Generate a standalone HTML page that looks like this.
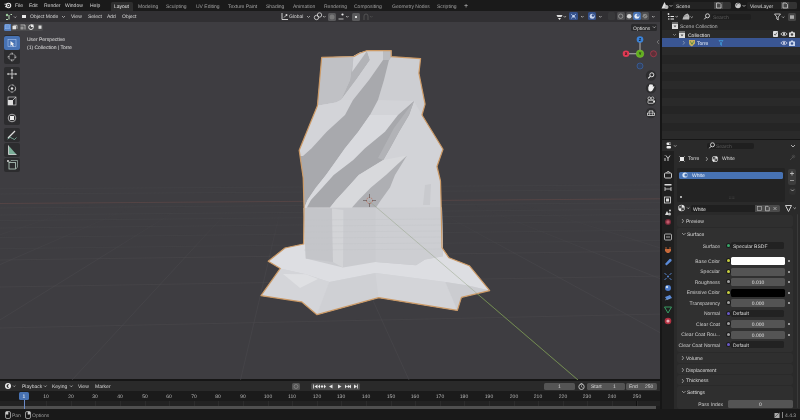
<!DOCTYPE html>
<html><head><meta charset="utf-8">
<style>
*{margin:0;padding:0;box-sizing:border-box}
html,body{width:800px;height:420px;overflow:hidden;background:#161616;font-family:"Liberation Sans",sans-serif;color:#d6d6d6;text-rendering:geometricPrecision}
.a{position:absolute}
.t{position:absolute;font-size:5px;line-height:8.4px;white-space:nowrap;will-change:transform}
.r{text-align:right}
.c{text-align:center}
#top{left:0;top:0;width:800px;height:11px;background:#1a1a1a}
#vp{left:0;top:11px;width:660px;height:368px;background:#3e3d41;overflow:hidden}
#ol{left:662px;top:11px;width:138px;height:128px;background:#252525}
#pr{left:662px;top:140px;width:138px;height:269px;background:#2a2a2a;overflow:hidden}
#tl{left:0;top:381px;width:660px;height:28px;background:#1d1d1d;overflow:hidden}
#sb{left:0;top:409px;width:800px;height:11px;background:#191919}
svg{position:absolute;left:0;top:0}
</style></head><body>
<!-- TOP BAR -->
<div id="top" class="a">
  <svg width="12" height="11" style="left:1.5px;top:-0.5px"><circle cx="6.5" cy="5.5" r="2.2" fill="none" stroke="#e8e8e8" stroke-width="1.1"/><path d="M2.5 4.2 L5.5 4.2 M3 6.8 L5.5 6" stroke="#e8e8e8" stroke-width="0.9"/><circle cx="6.5" cy="5.5" r="0.8" fill="#e8e8e8"/></svg>
  <div class="t" style="left:15px;top:2px">File</div>
  <div class="t" style="left:29px;top:2px">Edit</div>
  <div class="t" style="left:44px;top:2px">Render</div>
  <div class="t" style="left:65px;top:2px">Window</div>
  <div class="t" style="left:90px;top:2px">Help</div>
  <div class="a" style="left:111px;top:2px;width:22px;height:9px;background:#2e2e2e;border-radius:1.5px 1.5px 0 0"></div>
  <div class="t" style="left:114px;top:3px;color:#e6e6e6">Layout</div>
  <div class="t" style="left:138px;top:3px;color:#a0a0a0">Modeling</div>
  <div class="t" style="left:166px;top:3px;color:#a0a0a0">Sculpting</div>
  <div class="t" style="left:196px;top:3px;color:#a0a0a0">UV Editing</div>
  <div class="t" style="left:228px;top:3px;color:#a0a0a0">Texture Paint</div>
  <div class="t" style="left:266px;top:3px;color:#a0a0a0">Shading</div>
  <div class="t" style="left:293px;top:3px;color:#a0a0a0">Animation</div>
  <div class="t" style="left:324px;top:3px;color:#a0a0a0">Rendering</div>
  <div class="t" style="left:354px;top:3px;color:#a0a0a0">Compositing</div>
  <div class="t" style="left:392px;top:3px;color:#a0a0a0">Geometry Nodes</div>
  <div class="t" style="left:437px;top:3px;color:#a0a0a0">Scripting</div>
  <div class="t" style="left:464px;top:2.5px;color:#c8c8c8;font-size:7px">+</div>
  <svg width="14" height="11" style="left:660px;top:0"><path d="M1.5 8.5 L4.5 2 L7.5 8.5 Z" fill="#e0e0e0"/><circle cx="6.5" cy="7" r="2" fill="#b8b8b8"/><path d="M9.5 5 L11 6.5 L12.5 5" stroke="#ccc" stroke-width="0.7" fill="none"/></svg>
  <div class="a" style="left:673px;top:2px;width:41px;height:7px;background:#232323;border-radius:1.5px 0 0 1.5px"></div>
  <div class="t" style="left:676px;top:2.5px;color:#d8d8d8">Scene</div>
  <div class="a" style="left:714px;top:2px;width:9px;height:7px;background:#474747"></div>
  <svg width="9" height="11" style="left:714px;top:0"><path d="M2.5 3 h3 l1.5 1.5 v3.5 h-4.5 z" fill="none" stroke="#ddd" stroke-width="0.7"/></svg>
  <div class="a" style="left:723px;top:2px;width:8px;height:7px;background:#333;border-radius:0 1.5px 1.5px 0"></div>
  <svg width="14" height="11" style="left:733px;top:0"><circle cx="5" cy="5.5" r="2.8" fill="#c8c8c8"/><path d="M3.5 5.5 a1.8 1.8 0 0 1 3 -1.5" stroke="#444" stroke-width="0.9" fill="none"/><path d="M9.5 5 L11 6.5 L12.5 5" stroke="#ccc" stroke-width="0.7" fill="none"/></svg>
  <div class="a" style="left:747px;top:2px;width:34px;height:7px;background:#232323;border-radius:1.5px 0 0 1.5px"></div>
  <div class="t" style="left:750px;top:2.5px;color:#d8d8d8">ViewLayer</div>
  <div class="a" style="left:781px;top:2px;width:8px;height:7px;background:#474747"></div>
  <svg width="9" height="11" style="left:781px;top:0"><path d="M2 3 h3 l1.5 1.5 v3.5 h-4.5 z" fill="none" stroke="#ddd" stroke-width="0.7"/></svg>
  <div class="a" style="left:789px;top:2px;width:8px;height:7px;background:#333;border-radius:0 1.5px 1.5px 0"></div>
</div>
<!-- VIEWPORT -->
<div id="vp" class="a"></div>
<div class="a" style="left:0;top:11px;width:660px;height:11px;background:#313033"></div>
<!-- grid & axis lines + object -->
<svg width="660" height="380" style="left:0;top:0">
  <defs><linearGradient id="gf" gradientUnits="userSpaceOnUse" x1="0" y1="205" x2="0" y2="265"><stop offset="0" stop-color="#49484c" stop-opacity="0"/><stop offset="1" stop-color="#49484c" stop-opacity="1"/></linearGradient></defs><g stroke="#454448" stroke-width="0.6" fill="none"><path d="M0 188.8 L660 184.9"/><path d="M0 194.0 L660 189.8"/><path d="M0 208.0 L660 202.7"/><path d="M0 215.0 L660 209.2"/><path d="M0 220.6 L660 214.4"/><path d="M0 228.0 L660 221.3"/><path d="M0 237.5 L660 230.1"/><path d="M0 248.7 L660 240.5"/></g><g stroke="#49484c" stroke-width="0.6" fill="none"><path d="M0 260.0 L660 251.0"/><path d="M0 287.0 L660 276.1"/><path d="M0 328.0 L660 314.1"/></g><g stroke="url(#gf)" stroke-width="0.6" fill="none"><path d="M88.8 205 L-434.2 380"/><path d="M137.0 205 L-265.5 380"/><path d="M185.2 205 L-96.8 380"/><path d="M233.4 205 L72.0 380"/><path d="M281.6 205 L240.5 380"/><path d="M329.7 205 L409.0 380"/><path d="M426.2 205 L746.8 380"/><path d="M474.4 205 L915.5 380"/><path d="M522.6 205 L1084.0 380"/></g>
  <path d="M0 203.5 L660 198.8" stroke="#5a4646" stroke-width="0.8"/>
  <path d="M369 201 L578 380" stroke="#6a8a3a" stroke-width="0.8"/>
</svg>
<!-- header items -->
<svg width="14" height="11" style="left:3px;top:11px"><circle cx="4" cy="4" r="1.2" fill="#9c9"/><path d="M3 8.5 h2 M6 4 v4.5 M7.5 3.5 h1.5" stroke="#bdb" stroke-width="1"/><path d="M11 5.5 L12.2 6.7 L13.4 5.5" stroke="#ccc" stroke-width="0.7" fill="none"/></svg>
<div class="a" style="left:22.3px;top:14.6px;width:4px;height:3.5px;background:#e8e8e8"></div>
<div class="t" style="left:30px;top:13px">Object Mode</div>
<svg width="6" height="11" style="left:61px;top:11px"><path d="M1 5 L2.5 6.5 L4 5" stroke="#ccc" stroke-width="0.7" fill="none"/></svg>
<div class="t" style="left:71px;top:13px">View</div>
<div class="t" style="left:88px;top:13px">Select</div>
<div class="t" style="left:107px;top:13px">Add</div>
<div class="t" style="left:122px;top:13px">Object</div>
<!-- center header -->
<svg width="10" height="11" style="left:280px;top:11px"><path d="M2 2 v6.5 h6" stroke="#ddd" stroke-width="0.9" fill="none"/><path d="M4 6.5 l2 -2" stroke="#ddd" stroke-width="0.8"/><circle cx="6.5" cy="4" r="1" fill="#ddd"/></svg>
<div class="t" style="left:289px;top:13px">Global</div>
<svg width="6" height="11" style="left:306px;top:11px"><path d="M1 5 L2.5 6.5 L4 5" stroke="#ccc" stroke-width="0.7" fill="none"/></svg>
<svg width="14" height="11" style="left:313px;top:11px"><circle cx="3.5" cy="6.5" r="2.2" stroke="#ddd" stroke-width="0.8" fill="none"/><circle cx="6.5" cy="4" r="2.2" stroke="#ddd" stroke-width="0.8" fill="none"/><path d="M10 5 L11.3 6.3 L12.6 5" stroke="#ccc" stroke-width="0.7" fill="none"/></svg>
<div class="a" style="left:328px;top:12.5px;width:8px;height:8px;background:#5a5a5c;border-radius:1.5px"></div>
<svg width="8" height="8" style="left:328px;top:12.5px"><circle cx="4" cy="4" r="2.5" fill="#787878"/></svg>
<svg width="14" height="11" style="left:337px;top:11px"><path d="M1.5 8 h5" stroke="#ddd" stroke-width="0.8"/><circle cx="5.5" cy="3.5" r="1.1" fill="#eee"/><path d="M9 5 L10.3 6.3 L11.6 5" stroke="#ccc" stroke-width="0.7" fill="none"/></svg>
<div class="a" style="left:352px;top:12.5px;width:8px;height:8px;background:#5a5a5c;border-radius:1.5px"></div>
<div class="a" style="left:355px;top:15.5px;width:2px;height:2px;background:#ddd"></div>
<svg width="14" height="11" style="left:361px;top:11px"><path d="M3 9 v-4 a2 2 0 0 1 4 0 v4" stroke="#5a5a5a" stroke-width="0.8" fill="none"/><path d="M9 5 L10.3 6.3 L11.6 5" stroke="#555" stroke-width="0.7" fill="none"/></svg>
<!-- right header -->
<svg width="12" height="11" style="left:555px;top:11px"><path d="M1.5 4 h6 l-1 2 h-4 z" fill="#ddd"/><path d="M3 7 l1.5 2 l1.5 -2z" fill="#eee"/><path d="M8.5 5 L9.8 6.3 L11.1 5" stroke="#ccc" stroke-width="0.7" fill="none"/></svg>
<div class="a" style="left:568.6px;top:12.2px;width:9px;height:8px;background:#34508a;border-radius:1.5px"></div>
<svg width="9" height="8" style="left:568.6px;top:12.2px"><path d="M2 2 L7 6.5 M7 2 L2 6.5" stroke="#9ab4e0" stroke-width="0.9"/><circle cx="4.5" cy="4.2" r="1.2" fill="#c8d4ec"/></svg>
<svg width="6" height="11" style="left:579.5px;top:11px"><path d="M1 5 L2.3 6.3 L3.6 5" stroke="#ccc" stroke-width="0.7" fill="none"/></svg>
<div class="a" style="left:587.8px;top:12.2px;width:8.5px;height:8px;background:#34508a;border-radius:1.5px"></div>
<svg width="9" height="8" style="left:587.8px;top:12.2px"><circle cx="4.2" cy="4.2" r="2.5" fill="#c8d4ec"/><circle cx="5" cy="3.5" r="1.2" fill="#34508a"/></svg>
<svg width="6" height="11" style="left:598px;top:11px"><path d="M1 5 L2.3 6.3 L3.6 5" stroke="#ccc" stroke-width="0.7" fill="none"/></svg>
<div class="a" style="left:607.5px;top:12.2px;width:7.5px;height:8px;background:#38383a;border-radius:1.5px"></div>
<div class="a" style="left:617px;top:12.2px;width:7.5px;height:8px;background:#4e4e50;border-radius:1.5px"></div>
<div class="a" style="left:625.5px;top:12.2px;width:7.5px;height:8px;background:#4e4e50;border-radius:1.5px"></div>
<div class="a" style="left:633.2px;top:12.2px;width:7.5px;height:8px;background:#4772b3;border-radius:1.5px"></div>
<div class="a" style="left:641.3px;top:12.2px;width:7.5px;height:8px;background:#4e4e50;border-radius:1.5px"></div>
<svg width="34" height="9" style="left:616px;top:12px">
  <circle cx="4.7" cy="4.2" r="2.2" fill="none" stroke="#aaa" stroke-width="0.7"/>
  <circle cx="13.2" cy="4.2" r="2.3" fill="#d8d8d8"/>
  <circle cx="20.9" cy="4.2" r="2.5" fill="#e6ecf6"/><circle cx="21.9" cy="3.4" r="1.3" fill="#5a80c0"/>
  <circle cx="29" cy="4.2" r="2.4" fill="#8a8a8a"/><path d="M27.3 5.7 L30.7 2.7" stroke="#4a4a4a" stroke-width="0.7"/>
</svg>
<svg width="6" height="11" style="left:650.5px;top:11px"><path d="M1 5 L2.3 6.3 L3.6 5" stroke="#ccc" stroke-width="0.7" fill="none"/></svg>
<!-- select mode row -->
<div class="a" style="left:11px;top:23.6px;width:32px;height:7px;background:#4a4a4c;border-radius:0 1.5px 1.5px 0"></div>
<div class="a" style="left:4px;top:23.6px;width:7px;height:7px;background:#5680c2;border-radius:1.5px 0 0 1.5px"></div>
<svg width="40" height="8" style="left:4px;top:23.2px">
  <rect x="1.5" y="1.8" width="4" height="4" fill="#6c98d8" stroke="#9ab8e8" stroke-width="0.5"/>
  <rect x="8.5" y="2.8" width="3.5" height="3.5" fill="#e0e0e0"/><path d="M9.5 2.3 h3.5 v3.5" fill="none" stroke="#ddd" stroke-width="0.7"/>
  <path d="M16.5 2 h4.5 v4.5" fill="none" stroke="#ddd" stroke-width="0.7"/><rect x="16.5" y="3.5" width="3" height="3" fill="#999"/>
  <circle cx="27" cy="4.2" r="2.3" fill="none" stroke="#e8e8e8" stroke-width="1"/><rect x="27" y="1.5" width="2.5" height="2.5" fill="#e8e8e8"/>
  <rect x="34.5" y="2.5" width="3" height="3.3" fill="#ddd"/>
</svg>
<!-- overlay text -->
<div class="t" style="left:27px;top:36px;color:#e0e0e0">User Perspective</div>
<div class="t" style="left:27px;top:43.5px;color:#e0e0e0">(1) Collection | Torre</div>
<!-- toolbar -->
<div class="a" style="left:4px;top:35px;width:16px;height:29px;background:#2c2c2e;border-radius:2px"></div>
<div class="a" style="left:4px;top:36px;width:16px;height:14px;background:#4772b3;border-radius:2px"></div>
<svg width="16" height="14" style="left:4px;top:36px"><rect x="4" y="3.5" width="8" height="7" fill="none" stroke="#a8c4ee" stroke-width="0.6"/><path d="M6.5 5 L6.5 10 L7.8 8.8 L9 10.8 L9.8 10.3 L8.8 8.3 L10.5 8.2 Z" fill="#f0f0f0"/></svg>
<svg width="16" height="14" style="left:4px;top:50px"><circle cx="8" cy="7" r="3.3" fill="none" stroke="#ddd" stroke-width="0.8" stroke-dasharray="1.5 1"/><path d="M8 2.5 v2.3 M8 9.2 v2.3 M3.5 7 h2.3 M10.2 7 h2.3" stroke="#ddd" stroke-width="0.7"/></svg>
<div class="a" style="left:4px;top:67px;width:16px;height:58px;background:#2c2c2e;border-radius:2px"></div>
<svg width="16" height="58" style="left:4px;top:67px">
  <path d="M8 2.5 v9 M3.5 7 h9" stroke="#ddd" stroke-width="0.8"/><path d="M8 2 l-1.3 1.5 h2.6z M8 12 l-1.3 -1.5 h2.6z M3 7 l1.5 -1.3 v2.6z M13 7 l-1.5 -1.3 v2.6z" fill="#ddd"/>
  <circle cx="8" cy="21.5" r="3.6" fill="none" stroke="#ddd" stroke-width="0.8" stroke-dasharray="3 1"/><circle cx="8" cy="21.5" r="1.2" fill="#ddd"/>
  <rect x="4" y="33" width="5" height="5" fill="#ddd"/><rect x="4" y="30" width="8" height="8" fill="none" stroke="#ddd" stroke-width="0.6"/><path d="M9 33 l3 -3" stroke="#ddd" stroke-width="0.7"/>
  <circle cx="8" cy="51" r="3.8" fill="none" stroke="#ddd" stroke-width="0.7"/><rect x="6" y="49" width="4" height="4" fill="#eee"/>
</svg>
<div class="a" style="left:4px;top:128px;width:16px;height:14px;background:#2c2c2e;border-radius:2px"></div>
<svg width="16" height="14" style="left:4px;top:128px"><path d="M4 10 L11 3" stroke="#ddd" stroke-width="1.2"/><path d="M3.5 11 q3 -3 5 -0.5 t4 -1" stroke="#8fd0b8" stroke-width="0.7" fill="none"/></svg>
<div class="a" style="left:4px;top:143px;width:16px;height:14px;background:#2c2c2e;border-radius:2px"></div>
<svg width="16" height="14" style="left:4px;top:143px"><path d="M4.5 2.5 v9 h8 z" fill="#7aae98"/><path d="M4.5 2.5 v9 h8" stroke="#ddd" stroke-width="0.8" fill="none"/></svg>
<div class="a" style="left:4px;top:158px;width:16px;height:14px;background:#2c2c2e;border-radius:2px"></div>
<svg width="16" height="14" style="left:4px;top:158px"><rect x="5" y="4.5" width="6.5" height="6.5" fill="none" stroke="#b8d0c4" stroke-width="0.8"/><path d="M5 4.5 l2 -2 h6.5 v6.5 l-1.5 2" stroke="#b8d0c4" stroke-width="0.6" fill="none"/><circle cx="4" cy="3" r="1" fill="#ddd"/></svg>
<!-- Options -->
<div class="a" style="left:631px;top:24px;width:26px;height:7px;background:#2a2a2c;border-radius:1.5px"></div>
<div class="t" style="left:633px;top:24.5px;color:#ddd">Options</div>
<svg width="6" height="8" style="left:652px;top:23px"><path d="M1 3.5 L2.3 4.8 L3.6 3.5" stroke="#ccc" stroke-width="0.7" fill="none"/></svg>
<svg width="4" height="6" style="left:656px;top:39px"><path d="M3 1 L1 3 L3 5" stroke="#888" stroke-width="0.7" fill="none"/></svg>
<!-- gizmo -->
<svg width="40" height="40" style="left:620px;top:34px">
  <path d="M20 19.75 L20 5.5 M20 19.75 L6 19.75" stroke="#d0d0d0" stroke-width="0.8"/>
  <circle cx="20" cy="32" r="3" fill="#34425c" stroke="#3a6ab8" stroke-width="0.6"/>
  <circle cx="33.5" cy="19.75" r="3" fill="#5c3038" stroke="#c83a52" stroke-width="0.6"/>
  <circle cx="20" cy="5.5" r="3.3" fill="#3a82d8"/>
  <circle cx="6" cy="19.75" r="3.3" fill="#e03a54"/>
  <circle cx="20" cy="19.75" r="3.8" fill="#62b020" stroke="#8ad040" stroke-width="0.4"/>
  <g font-size="4" text-anchor="middle" fill="#111" font-family="Liberation Sans" font-weight="bold"><text x="20" y="21.2">Y</text><text x="20" y="7">Z</text><text x="6" y="21.2">X</text></g>
</svg>
<!-- nav buttons -->
<svg width="14" height="56" style="left:644px;top:70px">
  <g fill="#2e2e30"><circle cx="7" cy="5.5" r="5.2"/><circle cx="7" cy="18.3" r="5.2"/><circle cx="7" cy="30.6" r="5.2"/><circle cx="7" cy="43" r="5.2"/></g>
  <circle cx="7.8" cy="4.8" r="2" fill="none" stroke="#eee" stroke-width="0.9"/><path d="M6.3 6.3 L4.2 8.4" stroke="#eee" stroke-width="1.1"/>
  <path d="M4.3 19.5 L4.3 17 Q4.3 16.2 5 16.2 L5 15.2 Q5 14.5 5.7 14.5 Q6.3 14.5 6.3 15.2 L6.3 14.8 Q6.3 14.1 7 14.1 Q7.6 14.1 7.6 14.8 L7.6 15.2 Q7.6 14.6 8.3 14.6 Q8.9 14.6 8.9 15.3 L8.9 17 L9.6 16.3 Q10.2 15.9 10.5 16.5 L9 19.5 Q8.2 21.5 6.5 21.5 Q4.3 21.5 4.3 19.5 Z" fill="#eee"/>
  <circle cx="5.3" cy="28.3" r="1.4" fill="none" stroke="#eee" stroke-width="0.7"/><circle cx="8.5" cy="28.3" r="1.4" fill="none" stroke="#eee" stroke-width="0.7"/><rect x="4" y="30.3" width="5.5" height="3" rx="0.5" fill="none" stroke="#eee" stroke-width="0.7"/><path d="M9.5 31 l1.5 -0.8 v2.6 l-1.5 -0.8" fill="#eee"/>
  <path d="M3.5 45.5 v-2.5 q3.5 -4.5 7 0 v2.5z" fill="none" stroke="#eee" stroke-width="0.7"/><path d="M3.5 43.3 h7 M5.6 40.3 v5.2 M8.4 40.3 v5.2" stroke="#eee" stroke-width="0.5"/>
</svg>
<!-- OBJECT -->
<svg width="660" height="380" style="left:0;top:0" id="obj">
  <path d="M321.7 57.3 L354 56.5 L359 53.5 L366.4 50.7 L391.2 50.5 L391.2 56.6 L420.6 58.6 L418.9 73.2 L425.1 104.2 L422 115 L443 149.3 L437 166.5 L440.5 181 L441 199 L442 247.6 L449 257.8 L469.3 265.7 L489.7 290.6 L461.4 297.4 L457.4 310.4 L378.7 297.7 L317 314.7 L301.6 301.8 L261 295.7 L280.3 268.4 L268.2 261.3 L285 248 L303.6 244 L304 207 L303.2 178 L299.2 150.3 L317.4 105.7 Z" fill="#d2d3d7"/>
  <!-- upper left face -->
  <path d="M322 57.5 L353.5 56 L350 80 L341 100 L336 102.5 L317.4 105.7 Z" fill="#c0c1c5"/>
  <path d="M353.5 56 L360 52.5 L367 50.8 L370 60 L356 80 L341 100 L350 80 Z" fill="#b2b3b7"/>
  <path d="M353.5 56 L360 52.5 L367 51 L352 72 Z" fill="#d4d5d9"/>
  <!-- right face -->
  <path d="M391.2 57 L420.4 58.8 L418.9 73.2 L425 104 L422 115 L414 101 L378 100 L384 80 L389 60 Z" fill="#cdced2"/>
  <!-- light strip A + lower-left light face -->
  <path d="M367 51 L383 51 L383 60 L369 80 L353 100 L345 115 L326.7 131.7 L311.7 148.3 L303 156 L299.5 150.5 L317.4 105.7 L336 102.5 L341 100 L356 80 L370 60 Z" fill="#d0d1d5"/>
  <path d="M317.4 105.7 L336 102.5 L341 100 L353 100 L345 115 L326.7 131.7 L311.7 148.3 L303 156 L299.5 150.5 Z" fill="#d3d4d8"/>
  <!-- band 1 -->
  <path d="M383 51 L391.2 50.8 L391.2 57 L389 60 L384 80 L378 100 L370 115 L358.3 131.7 L345 148.3 L336.7 160 L326 175 L316 187.5 L307.5 200 L304.5 207.5 L303.5 178 L300 156 L303 156 L311.7 148.3 L326.7 131.7 L345 115 L353 100 L369 80 L383 60 Z" fill="#a8a9ad"/>
  <path d="M383 51 L391.2 50.8 L391.2 57 L389 60 L383 60 Z" fill="#bbbcc0"/>
  <!-- ridge 1 lighter -->
  <path d="M370 115 L401.7 115 L388.3 131.7 L365 148.3 L353.3 160 L333.75 175 L322.5 187.5 L311 200 L307 207.5 L304.5 207.5 L307.5 200 L316 187.5 L326 175 L336.7 160 L345 148.3 L358.3 131.7 Z" fill="#d9dade"/>
  <!-- band 2 -->
  <path d="M414 101 L409 115 L399 131.7 L390 148.3 L383.3 160 L358.75 175 L347.5 187.5 L336 200 L330 207.5 L307 207.5 L311 200 L322.5 187.5 L333.75 175 L353.3 160 L365 148.3 L385 131.7 L398 115 Z" fill="#a7a8ac"/>
  <path d="M414 101 L409 115 L399 131.7 L390 148.3 L383.3 160 L378 158 L394 128 Z" fill="#b2b3b7"/>
  <!-- ridge 2 -->
  <path d="M383.3 160 L407 155.5 L386 175 L371 187.5 L358.75 200 L352 207.5 L330 207.5 L336 200 L347.5 187.5 L358.75 175 Z" fill="#d8d9dc"/>
  <!-- band 3 -->
  <path d="M407 155.5 L395 175 L390 187.5 L381 200 L376 207.5 L352 207.5 L358.75 200 L371 187.5 L386 175 Z" fill="#aeafb3"/>
  <path d="M425 185 L431 184 L430 205 L423 205 Z" fill="#c9cace"/>
  <!-- base -->
  <path d="M303.6 244 L285 248 L268.2 261.3 L280.3 268.4 L305.8 274.3 L329.4 282 L375.6 273 L445.4 282 L468 285.6 L489.7 290.6 L469.3 265.7 L449 257.8 L442 247.6 Z" fill="#dddee2"/>
  <path d="M261 295.7 L280.3 268.4 L305.8 274.3 L329.4 282 L317 314.7 L301.6 301.8 Z" fill="#d4d5d9"/>
  <path d="M283 274 L305.8 274.3 L318 279 L300 288 Z" fill="#dfe0e3"/>
  <path d="M329.4 282 L375.6 273 L378.7 297.7 L317 314.7 Z" fill="#cfd0d4"/>
  <path d="M375.6 273 L445.4 282 L457.4 310.4 L378.7 297.7 Z" fill="#d3d4d8"/>
  <path d="M445.4 282 L468 285.6 L489.7 290.6 L461.4 297.4 L457.4 310.4 Z" fill="#cbccd0"/>
  <!-- lower box -->
  <path d="M303.6 208 L442 207.5 L443 256.3 L425 259.6 L416 265.3 L375.6 262 L343 267.5 L305.8 258.5 Z" fill="#cacbcf"/>
  <path d="M303.6 208 L332 208.5 L333 262 L305.8 258.5 Z" fill="#c4c5c9"/>
  <path d="M332 208.5 L343.4 210 L343 267.5 L333 262 Z" fill="#d3d4d7"/>
  <path d="M375.6 209 L442 207.5 L443 256.3 L425 259.6 L416 265.3 L375.6 262 Z" fill="#cdced2"/>
  <g stroke="#c0c1c5" stroke-width="0.35"><path d="M304 220 L442 219"/><path d="M304 226 L442 225"/><path d="M304 232 L442 231"/><path d="M304 238 L442 237"/><path d="M304 244 L442 243"/><path d="M304 250 L442 249"/></g>
  <!-- outline -->
  <path d="M321.7 57.3 L354 56.5 L359 53.5 L366.4 50.7 L391.2 50.5 L391.2 56.6 L420.6 58.6 L418.9 73.2 L425.1 104.2 L422 115 L443 149.3 L437 166.5 L440.5 181 L441 199 L442 247.6 L449 257.8 L469.3 265.7 L489.7 290.6 L461.4 297.4 L457.4 310.4 L378.7 297.7 L317 314.7 L301.6 301.8 L261 295.7 L280.3 268.4 L268.2 261.3 L285 248 L303.6 244 L304 207 L303.2 178 L299.2 150.3 L317.4 105.7 Z" fill="none" stroke="#cc9a66" stroke-width="1.2" stroke-linejoin="round"/>
  <!-- y axis line over object -->
  <path d="M369 201 L578 380" stroke="#8a9a78" stroke-width="0.6" opacity="0.7"/>
  <!-- 3d cursor -->
  <g transform="translate(369.5,200.5)">
    <circle r="3" fill="none" stroke="#c06048" stroke-width="0.7" stroke-dasharray="1.5 1.1"/>
    <path d="M0 -6.5 v4 M0 2.5 v4 M-6.5 0 h4 M2.5 0 h4" stroke="#5a4a48" stroke-width="0.6"/>
  </g>
</svg>

<!-- OUTLINER -->
<div id="ol" class="a"></div>
<div class="a" style="left:662px;top:30.3px;width:138px;height:8.4px;background:#2a2a2a"></div>
<div class="a" style="left:662px;top:47.1px;width:138px;height:8.4px;background:#2a2a2a"></div>
<div class="a" style="left:662px;top:63.9px;width:138px;height:8.4px;background:#2a2a2a"></div>
<div class="a" style="left:662px;top:80.7px;width:138px;height:8.4px;background:#2a2a2a"></div>
<div class="a" style="left:662px;top:97.5px;width:138px;height:8.4px;background:#2a2a2a"></div>
<div class="a" style="left:662px;top:114.3px;width:138px;height:8.4px;background:#2a2a2a"></div>
<div class="a" style="left:662px;top:131.1px;width:138px;height:7.9px;background:#2a2a2a"></div>
<!-- outliner header -->
<svg width="14" height="11" style="left:666px;top:11px"><circle cx="2.5" cy="3" r="0.9" fill="#ddd"/><path d="M2 5.5 h1.5 M4.5 5.5 h3.5 M2 8 h1.5 M4.5 8 h3.5" stroke="#eee" stroke-width="1"/><path d="M9.5 5 L10.7 6.2 L11.9 5" stroke="#ccc" stroke-width="0.7" fill="none"/></svg>
<svg width="14" height="11" style="left:681px;top:11px"><path d="M1.5 8.5 q1 -5 5 -6 q3 2 1.5 6z" fill="#bbb"/><path d="M3 6 q2 -2 4 -1" stroke="#777" stroke-width="0.6" fill="none"/><path d="M9.5 5.5 L10.7 6.7 L11.9 5.5" stroke="#ccc" stroke-width="0.7" fill="none"/></svg>
<svg width="10" height="11" style="left:702px;top:11px"><circle cx="5.5" cy="4.8" r="2" fill="none" stroke="#ddd" stroke-width="0.9"/><path d="M4 6.3 L2.3 8.3" stroke="#ddd" stroke-width="1"/></svg>
<div class="a" style="left:711px;top:13.5px;width:40px;height:6.5px;background:#1f1f1f;border-radius:2px"></div>
<div class="t" style="left:713px;top:14px;color:#5c5c5c">Search</div>
<svg width="14" height="11" style="left:773px;top:11px"><path d="M1.5 3 h6 l-2.3 3 v3 l-1.4 -1 v-2z" fill="none" stroke="#ddd" stroke-width="0.8"/><path d="M9 5.5 L10.2 6.7 L11.4 5.5" stroke="#ccc" stroke-width="0.7" fill="none"/></svg>
<div class="a" style="left:788px;top:13px;width:8px;height:7.5px;background:#444;border-radius:1.5px"></div>
<svg width="8" height="8" style="left:788px;top:13px"><rect x="2" y="2.3" width="4" height="3.5" fill="#aaa"/></svg>
<!-- rows -->
<svg width="8" height="8" style="left:671px;top:21.5px"><path d="M1 2 h6 v5 h-6z" fill="#ddd"/><path d="M2.5 3.5 h3 l-1.5 2z" fill="#555"/><path d="M1 1 h6" stroke="#ddd" stroke-width="0.8"/></svg>
<div class="t" style="left:680px;top:22.9px;color:#b8b8b8">Scene Collection</div>
<svg width="6" height="8" style="left:672px;top:31px"><path d="M1 3 L2.5 4.5 L4 3" stroke="#999" stroke-width="0.7" fill="none"/></svg>
<svg width="8" height="8" style="left:678px;top:30.5px"><path d="M1 2 h6 v5 h-6z" fill="#ddd"/><path d="M2.5 3.5 h3 l-1.5 2z" fill="#555"/><path d="M1 1 h6" stroke="#ddd" stroke-width="0.8"/></svg>
<div class="t" style="left:688px;top:32px;color:#e8e8e8">Collection</div>
<div class="a" style="left:773px;top:31px;width:5px;height:5.5px;background:#ddd;border-radius:0.8px"></div>
<svg width="5" height="6" style="left:773px;top:31px"><path d="M1 3 L2.2 4.2 L4 1.5" stroke="#333" stroke-width="0.7" fill="none"/></svg>
<svg width="8" height="8" style="left:780px;top:30px"><path d="M0.8 4 q3.2 -3.5 6.4 0 q-3.2 3.5 -6.4 0z" fill="none" stroke="#eee" stroke-width="0.7"/><circle cx="4" cy="4" r="1.1" fill="#eee"/></svg>
<svg width="8" height="8" style="left:788px;top:30px"><path d="M1 2.5 h1.5 l0.8 -1 h1.5 l0.8 1 h1.4 v4.5 h-6z" fill="#ddd"/><circle cx="4" cy="4.5" r="1.2" fill="#444"/></svg>
<div class="a" style="left:662px;top:38px;width:138px;height:8.5px;background:#3a5693"></div>
<svg width="6" height="8" style="left:681px;top:38.5px"><path d="M2 2 L3.5 3.8 L2 5.6" stroke="#9ab" stroke-width="0.7" fill="none"/></svg>
<svg width="8" height="8" style="left:688px;top:38.5px"><path d="M1 1 h6 v3.5 q-3 3 -3 3 q-3 -1 -3 -3z" fill="#c8b060"/><path d="M2.3 2.3 l1.7 3 l1.7 -3" stroke="#5a8a3a" stroke-width="0.9" fill="none"/></svg>
<div class="t" style="left:697px;top:40.2px;color:#e8eef8">Torre</div>
<svg width="6" height="8" style="left:718px;top:38.5px"><path d="M1 1.5 h4 l-1.5 2 v3 l-1 -0.8 v-2.2z" fill="none" stroke="#3fa0e0" stroke-width="0.7"/></svg>
<svg width="8" height="8" style="left:780px;top:38.5px"><path d="M0.8 4 q3.2 -3.5 6.4 0 q-3.2 3.5 -6.4 0z" fill="none" stroke="#dde" stroke-width="0.7"/><circle cx="4" cy="4" r="1.1" fill="#dde"/></svg>
<svg width="8" height="8" style="left:788px;top:38.5px"><path d="M1 2.5 h1.5 l0.8 -1 h1.5 l0.8 1 h1.4 v4.5 h-6z" fill="#c8d4ec"/><circle cx="4" cy="4.5" r="1.2" fill="#3a5693"/></svg>
<!-- PROPERTIES -->
<div id="pr" class="a"></div>
<!-- properties tab column -->
<div class="a" style="left:662px;top:151px;width:12px;height:258px;background:#1f1f1f"></div>
<svg width="12" height="180" style="left:662px;top:151px">
  <g fill="#ddd" stroke="#ddd">
  <path d="M3 10 v-3 M3 5 v-0.5 M6 10 v-2.5 l-2 -3 M6 7.5 l2 -3" stroke-width="0.9" fill="none"/>
  <rect x="2.5" y="22" width="7" height="5" rx="1" fill="none" stroke-width="0.9"/><path d="M4.5 22 l1 -1.5 h1.5 l1 1.5" stroke-width="0.7" fill="none"/>
  <rect x="2.5" y="33" width="7" height="1.5" stroke="none"/><path d="M3 36 v4 M9 36 v4 M3 38 h6" stroke-width="0.8" fill="none"/>
  <rect x="2.5" y="46" width="6" height="6" fill="none" stroke-width="0.8"/><rect x="4" y="47.5" width="3" height="3" stroke="none"/>
  <path d="M3 64 l2 -4 l2 4z" stroke="none"/><circle cx="7.5" cy="63" r="1.5" stroke="none" fill="#bbb"/><circle cx="8" cy="59.5" r="0.9" stroke="none"/>
  </g>
  <circle cx="6" cy="71" r="3" fill="#7a2a3a"/><circle cx="6" cy="71" r="1.7" fill="#c05a6a"/>
  <g fill="none" stroke="#ccc" stroke-width="0.8">
  <rect x="2.5" y="83" width="7" height="6" rx="1"/><path d="M4 86 h4"/>
  </g>
  <path d="M3 98 h6 v2 l-2 2 h-2 l-2 -2z" fill="#c86a3a"/><path d="M4 98 v-2 M8 98 v-2" stroke="#c86a3a" stroke-width="0.8"/>
  <path d="M3 113 l4.5 -5 a1.5 1.5 0 0 1 2 2 l-5 4.5z" fill="#5a8ad8"/>
  <path d="M2.5 122 l2 2 M9.5 122 l-2 2 M2.5 129 l2 -2 M9.5 129 l-2 -2" stroke="#5a8ad8" stroke-width="0.9"/><circle cx="6" cy="125.5" r="1" fill="#5a8ad8"/>
  <circle cx="6" cy="137" r="3" fill="#4a7ac8"/><circle cx="5" cy="136" r="1.2" fill="#cde"/>
  <path d="M3 146 l5 -2 l2 3 l-5 2z" fill="#5a8ad8"/><path d="M3 149 l5 -2" stroke="#8ab" stroke-width="0.6"/>
  <path d="M2.5 156 h7 l-3.5 6z" fill="none" stroke="#3aa86a" stroke-width="0.9"/>
  <circle cx="6" cy="170" r="3.3" fill="#b03040"/><circle cx="6" cy="170" r="1.6" fill="#e8b0b8"/>
</svg>
<!-- properties header -->
<svg width="14" height="11" style="left:664px;top:140px"><rect x="2.5" y="2.5" width="4.5" height="2.5" rx="1" fill="#eee"/><rect x="2.5" y="6" width="4.5" height="2.5" rx="1" fill="#eee"/><circle cx="6" cy="3.7" r="1" fill="#555"/><path d="M10 5.3 L11.2 6.5 L12.4 5.3" stroke="#ccc" stroke-width="0.7" fill="none"/></svg>
<div class="a" style="left:707px;top:142.5px;width:47px;height:6px;background:#1f1f1f;border-radius:2px"></div>
<svg width="10" height="11" style="left:707px;top:140px"><circle cx="5.5" cy="4.8" r="2" fill="none" stroke="#ddd" stroke-width="0.9"/><path d="M4 6.3 L2.3 8.3" stroke="#ddd" stroke-width="1"/></svg>
<div class="t" style="left:716px;top:142.5px;color:#5a5a5a">Search</div>
<svg width="8" height="8" style="left:789px;top:142px"><path d="M2 3 L4 5 L6 3" stroke="#ccc" stroke-width="0.8" fill="none"/></svg>
<!-- breadcrumb -->
<svg width="8" height="8" style="left:678px;top:154.5px"><rect x="2" y="2" width="4" height="4" fill="#e8e8e8"/><path d="M1 1 l1 1 M7 1 l-1 1 M1 7 l1 -1 M7 7 l-1 -1" stroke="#bbb" stroke-width="0.5"/></svg>
<div class="t" style="left:688px;top:155px;color:#ddd">Torre</div>
<svg width="6" height="8" style="left:704px;top:154.5px"><path d="M2 2 L3.6 4 L2 6" stroke="#bbb" stroke-width="0.7" fill="none"/></svg>
<svg width="8" height="8" style="left:711px;top:154.5px"><circle cx="4" cy="4" r="3.1" fill="#e8e8e8"/><path d="M4 1 v6 M1 4 h6" stroke="#444" stroke-width="0.6"/><circle cx="2.8" cy="2.8" r="1.1" fill="#444"/><circle cx="5.2" cy="5.2" r="1.1" fill="#444"/></svg>
<div class="t" style="left:722px;top:155px;color:#ddd">White</div>
<svg width="8" height="8" style="left:788px;top:154px"><path d="M2 6 L6 2" stroke="#555" stroke-width="0.8"/><circle cx="5.5" cy="2.5" r="1.3" fill="none" stroke="#555" stroke-width="0.6"/></svg>
<!-- material slot list -->
<div class="a" style="left:677px;top:168px;width:108px;height:34px;background:#232323;border-radius:2px"></div>
<div class="a" style="left:679px;top:171.5px;width:104px;height:7.5px;background:#4772b3;border-radius:1.5px"></div>
<svg width="8" height="8" style="left:681px;top:171px"><circle cx="4" cy="4" r="2.6" fill="#d8e6f8"/><circle cx="5" cy="4" r="1.6" fill="#4772b3"/></svg>
<div class="t" style="left:692px;top:172px;color:#e8eef8">White</div>
<div class="a" style="left:680px;top:196px;width:2px;height:1.5px;background:#aaa"></div>
<svg width="10" height="4" style="left:728px;top:195.5px"><path d="M1 1 h6 M1 2.5 h6" stroke="#4a4a4a" stroke-width="0.6" stroke-dasharray="0.8 0.6"/></svg>
<div class="a" style="left:788.4px;top:169px;width:8px;height:16px;background:#3c3c3c;border-radius:2px"></div>
<svg width="8" height="16" style="left:788.4px;top:169px"><path d="M4 2.5 v4 M2 4.5 h4" stroke="#ccc" stroke-width="0.8"/><path d="M2 11.5 h4" stroke="#aaa" stroke-width="0.8"/></svg>
<div class="a" style="left:788.5px;top:187px;width:7.5px;height:7.5px;background:#303030;border-radius:50%"></div>
<svg width="9" height="7" style="left:788px;top:187px"><path d="M3 2.5 L4.5 4 L6 2.5" stroke="#ccc" stroke-width="0.7" fill="none"/></svg>
<!-- material datablock row -->
<svg width="14" height="10" style="left:677px;top:203px"><circle cx="4.5" cy="5" r="3.3" fill="#e8e8e8"/><path d="M4.5 1.8 v6.4 M1.3 5 h6.4" stroke="#444" stroke-width="0.6"/><circle cx="3.2" cy="3.7" r="1.2" fill="#444"/><circle cx="5.8" cy="6.3" r="1.2" fill="#444"/><path d="M10 4.5 L11.2 5.7 L12.4 4.5" stroke="#ccc" stroke-width="0.7" fill="none"/></svg>
<div class="a" style="left:691px;top:205px;width:64px;height:7px;background:#1f1f1f;border-radius:1.5px 0 0 1.5px"></div>
<div class="t" style="left:693px;top:205.5px;color:#e0e0e0">White</div>
<div class="a" style="left:755px;top:205px;width:25px;height:7px;background:#4a4a4a;border-radius:0 1.5px 1.5px 0"></div>
<svg width="25" height="7" style="left:755px;top:205px"><rect x="2.5" y="1.5" width="4" height="4" fill="none" stroke="#bbb" stroke-width="0.6"/><path d="M10.5 1.3 h2.5 l1.3 1.3 v3.2 h-3.8z" fill="none" stroke="#ddd" stroke-width="0.6"/><path d="M18.5 2 l3 3 M21.5 2 l-3 3" stroke="#ccc" stroke-width="0.6"/></svg>
<svg width="14" height="10" style="left:784px;top:203px"><path d="M1.5 2.5 h6 l-3 6z" fill="none" stroke="#ddd" stroke-width="0.9"/><path d="M9.5 4.5 L10.7 5.7 L11.9 4.5" stroke="#ccc" stroke-width="0.7" fill="none"/></svg>
<!-- panels -->
<div class="a" style="left:677px;top:215px;width:116px;height:12px;background:#2f2f2f;border-radius:2px"></div>
<svg width="6" height="8" style="left:680px;top:217px"><path d="M2 2 L3.6 4 L2 6" stroke="#bbb" stroke-width="0.7" fill="none"/></svg>
<div class="t" style="left:686px;top:218px;color:#ddd">Preview</div>
<div class="a" style="left:677px;top:228px;width:116px;height:124px;background:#303030;border-radius:2px"></div>
<svg width="6" height="8" style="left:680px;top:230px"><path d="M2 3 L3.8 4.8 L5.6 3" stroke="#bbb" stroke-width="0.7" fill="none"/></svg>
<div class="t" style="left:687px;top:231px;color:#ddd">Surface</div>
<div class="t r" style="left:640px;width:80px;top:242.8px;color:#cfcfcf">Surface</div>
<div class="a" style="left:726px;top:243.0px;width:5px;height:5px;border-radius:50%;background:#1c1c1c"></div>
<div class="a" style="left:727px;top:244.0px;width:3px;height:3px;border-radius:50%;background:#3aa86a"></div>
<div class="a" style="left:731px;top:242.0px;width:53px;height:7px;background:#222;border-radius:1.5px"></div>
<div class="t" style="left:733px;top:242.5px;color:#ddd">Specular BSDF</div>
<div class="t r" style="left:640px;width:80px;top:257.8px;color:#cfcfcf">Base Color</div>
<div class="a" style="left:726px;top:258.0px;width:5px;height:5px;border-radius:50%;background:#1c1c1c"></div>
<div class="a" style="left:727px;top:259.0px;width:3px;height:3px;border-radius:50%;background:#c8d040"></div>
<div class="a" style="left:731px;top:257.0px;width:54px;height:8px;background:#ffffff;border-radius:1.5px"></div>
<div class="a" style="left:788px;top:260.0px;width:2px;height:2px;background:#bbb;border-radius:50%"></div>
<div class="t r" style="left:640px;width:80px;top:268.3px;color:#cfcfcf">Specular</div>
<div class="a" style="left:726px;top:268.5px;width:5px;height:5px;border-radius:50%;background:#1c1c1c"></div>
<div class="a" style="left:727px;top:269.5px;width:3px;height:3px;border-radius:50%;background:#c8d040"></div>
<div class="a" style="left:731px;top:267.5px;width:54px;height:8px;background:#545454;border-radius:1.5px"></div>
<div class="a" style="left:788px;top:270.5px;width:2px;height:2px;background:#bbb;border-radius:50%"></div>
<div class="t r" style="left:640px;width:80px;top:278.8px;color:#cfcfcf">Roughness</div>
<div class="a" style="left:726px;top:279.0px;width:5px;height:5px;border-radius:50%;background:#1c1c1c"></div>
<div class="a" style="left:727px;top:280.0px;width:3px;height:3px;border-radius:50%;background:#a0a0a0"></div>
<div class="a" style="left:731px;top:278.0px;width:54px;height:8px;background:#545454;border-radius:1.5px"></div>
<div class="t c" style="left:731px;width:54px;top:279.0px;color:#e0e0e0">0.010</div>
<div class="a" style="left:788px;top:281.0px;width:2px;height:2px;background:#bbb;border-radius:50%"></div>
<div class="t r" style="left:640px;width:80px;top:289.3px;color:#cfcfcf">Emissive Color</div>
<div class="a" style="left:726px;top:289.5px;width:5px;height:5px;border-radius:50%;background:#1c1c1c"></div>
<div class="a" style="left:727px;top:290.5px;width:3px;height:3px;border-radius:50%;background:#c8d040"></div>
<div class="a" style="left:731px;top:288.5px;width:54px;height:8px;background:#000000;border-radius:1.5px"></div>
<div class="a" style="left:788px;top:291.5px;width:2px;height:2px;background:#bbb;border-radius:50%"></div>
<div class="t r" style="left:640px;width:80px;top:299.8px;color:#cfcfcf">Transparency</div>
<div class="a" style="left:726px;top:300.0px;width:5px;height:5px;border-radius:50%;background:#1c1c1c"></div>
<div class="a" style="left:727px;top:301.0px;width:3px;height:3px;border-radius:50%;background:#a0a0a0"></div>
<div class="a" style="left:731px;top:299.0px;width:54px;height:8px;background:#545454;border-radius:1.5px"></div>
<div class="t c" style="left:731px;width:54px;top:300.0px;color:#e0e0e0">0.000</div>
<div class="a" style="left:788px;top:302.0px;width:2px;height:2px;background:#bbb;border-radius:50%"></div>
<div class="t r" style="left:640px;width:80px;top:310.3px;color:#cfcfcf">Normal</div>
<div class="a" style="left:726px;top:310.5px;width:5px;height:5px;border-radius:50%;background:#1c1c1c"></div>
<div class="a" style="left:727px;top:311.5px;width:3px;height:3px;border-radius:50%;background:#6a5ac8"></div>
<div class="a" style="left:731px;top:309.5px;width:53px;height:7px;background:#222;border-radius:1.5px"></div>
<div class="t" style="left:733px;top:310.0px;color:#ddd">Default</div>
<div class="t r" style="left:640px;width:80px;top:320.8px;color:#cfcfcf">Clear Coat</div>
<div class="a" style="left:726px;top:321.0px;width:5px;height:5px;border-radius:50%;background:#1c1c1c"></div>
<div class="a" style="left:727px;top:322.0px;width:3px;height:3px;border-radius:50%;background:#a0a0a0"></div>
<div class="a" style="left:731px;top:320.0px;width:54px;height:8px;background:#545454;border-radius:1.5px"></div>
<div class="t c" style="left:731px;width:54px;top:321.0px;color:#e0e0e0">0.000</div>
<div class="a" style="left:788px;top:323.0px;width:2px;height:2px;background:#bbb;border-radius:50%"></div>
<div class="t r" style="left:640px;width:80px;top:331.3px;color:#cfcfcf">Clear Coat Rou...</div>
<div class="a" style="left:726px;top:331.5px;width:5px;height:5px;border-radius:50%;background:#1c1c1c"></div>
<div class="a" style="left:727px;top:332.5px;width:3px;height:3px;border-radius:50%;background:#a0a0a0"></div>
<div class="a" style="left:731px;top:330.5px;width:54px;height:8px;background:#545454;border-radius:1.5px"></div>
<div class="t c" style="left:731px;width:54px;top:331.5px;color:#e0e0e0">0.000</div>
<div class="a" style="left:788px;top:333.5px;width:2px;height:2px;background:#bbb;border-radius:50%"></div>
<div class="t r" style="left:640px;width:80px;top:341.8px;color:#cfcfcf">Clear Coat Normal</div>
<div class="a" style="left:726px;top:342.0px;width:5px;height:5px;border-radius:50%;background:#1c1c1c"></div>
<div class="a" style="left:727px;top:343.0px;width:3px;height:3px;border-radius:50%;background:#6a5ac8"></div>
<div class="a" style="left:731px;top:341.0px;width:53px;height:7px;background:#222;border-radius:1.5px"></div>
<div class="t" style="left:733px;top:341.5px;color:#ddd">Default</div>
<div class="a" style="left:677px;top:353px;width:116px;height:10px;background:#2f2f2f;border-radius:2px"></div>
<svg width="6" height="8" style="left:680px;top:354px"><path d="M2 2 L3.6 4 L2 6" stroke="#bbb" stroke-width="0.7" fill="none"/></svg>
<div class="t" style="left:686px;top:355px;color:#ddd">Volume</div>
<div class="a" style="left:677px;top:364px;width:116px;height:10px;background:#2f2f2f;border-radius:2px"></div>
<svg width="6" height="8" style="left:680px;top:365.5px"><path d="M2 2 L3.6 4 L2 6" stroke="#bbb" stroke-width="0.7" fill="none"/></svg>
<div class="t" style="left:686px;top:366.5px;color:#ddd">Displacement</div>
<div class="a" style="left:677px;top:375px;width:116px;height:10px;background:#2f2f2f;border-radius:2px"></div>
<svg width="6" height="8" style="left:680px;top:376.5px"><path d="M2 2 L3.6 4 L2 6" stroke="#bbb" stroke-width="0.7" fill="none"/></svg>
<div class="t" style="left:686px;top:377px;color:#ddd">Thickness</div>
<div class="a" style="left:677px;top:386px;width:116px;height:23px;background:#2f2f2f;border-radius:2px"></div>
<svg width="6" height="8" style="left:680px;top:387.5px"><path d="M2 3 L3.8 4.8 L5.6 3" stroke="#bbb" stroke-width="0.7" fill="none"/></svg>
<div class="t" style="left:687px;top:388.5px;color:#ddd">Settings</div>
<div class="a" style="left:796.5px;top:214px;width:1.2px;height:194px;background:#3a3a3a;border-radius:1px"></div>
<div class="t r" style="left:640px;width:83px;top:401px;color:#cfcfcf">Pass Index</div>
<div class="a" style="left:728px;top:400px;width:65px;height:7.5px;background:#545454;border-radius:1.5px"></div>
<div class="t c" style="left:728px;width:65px;top:401px;color:#e0e0e0">0</div>
<!-- TIMELINE -->
<div id="tl" class="a"></div>
<div class="a" style="left:0;top:381px;width:660px;height:10px;background:#2a2a2a"></div>
<svg width="14" height="10" style="left:3px;top:381px"><circle cx="5" cy="5" r="3" fill="#eee"/><path d="M6 3.2 a1.9 1.9 0 1 0 0 3.6 a2.5 2.5 0 0 1 0 -3.6z" fill="#333"/><path d="M10 4.5 L11.2 5.7 L12.4 4.5" stroke="#bbb" stroke-width="0.7" fill="none"/></svg>
<div class="t" style="left:22px;top:383px">Playback</div>
<svg width="6" height="10" style="left:43px;top:381px"><path d="M1 4.5 L2.3 5.8 L3.6 4.5" stroke="#ccc" stroke-width="0.7" fill="none"/></svg>
<div class="t" style="left:52px;top:383px">Keying</div>
<svg width="6" height="10" style="left:69px;top:381px"><path d="M1 4.5 L2.3 5.8 L3.6 4.5" stroke="#ccc" stroke-width="0.7" fill="none"/></svg>
<div class="t" style="left:78px;top:383px">View</div>
<div class="t" style="left:95px;top:383px">Marker</div>
<div class="a" style="left:292px;top:382.5px;width:8px;height:7px;background:#555;border-radius:1.5px"></div>
<svg width="8" height="7" style="left:292px;top:382.5px"><circle cx="4" cy="3.5" r="2" fill="none" stroke="#999" stroke-width="0.6"/></svg>
<div class="a" style="left:311px;top:382.5px;width:49px;height:7px;background:#4a4a4a;border-radius:1.5px"></div>
<svg width="49" height="7" style="left:311px;top:382.5px" fill="#e8e8e8">
  <rect x="2" y="1.5" width="0.8" height="4"/><path d="M6.5 1.5 v4 l-3 -2z"/>
  <path d="M9.5 3.5 l1.5 -1.5 l1.5 1.5 l-1.5 1.5z"/><path d="M9 1.5 v4 l-2 -2z M13 1.5 v4 l2 -2z"/>
  <path d="M21.5 1.5 v4 l-3.5 -2z"/>
  <path d="M27 1.5 v4 l3.5 -2z"/>
  <path d="M36 3.5 l1.5 -1.5 l1.5 1.5 l-1.5 1.5z"/><path d="M34 1.5 v4 l2 -2z M40 1.5 v4 l-2 -2z"/>
  <path d="M43 1.5 v4 l3 -2z"/><rect x="46.2" y="1.5" width="0.8" height="4"/>
</svg>
<div class="a" style="left:544px;top:382.5px;width:31px;height:7px;background:#545454;border-radius:1.5px"></div>
<div class="t c" style="left:544px;width:31px;top:383px">1</div>
<svg width="9" height="9" style="left:577px;top:381.5px"><circle cx="4.5" cy="4.8" r="2.7" fill="none" stroke="#ddd" stroke-width="0.8"/><path d="M4.5 3.3 v1.5 l1 0.8" stroke="#ddd" stroke-width="0.6" fill="none"/><path d="M3.5 1.5 h2" stroke="#ddd" stroke-width="0.6"/></svg>
<div class="a" style="left:587px;top:382.5px;width:38px;height:7px;background:#545454;border-radius:1.5px"></div>
<div class="t" style="left:591px;top:383px">Start</div>
<div class="t" style="left:613px;top:383px">1</div>
<div class="a" style="left:626px;top:382.5px;width:31px;height:7px;background:#545454;border-radius:1.5px"></div>
<div class="t" style="left:629px;top:383px">End</div>
<div class="t" style="left:645px;top:383px">250</div>
<!-- ruler -->
<div class="a" style="left:0;top:391px;width:660px;height:10px;background:#1b1b1b"></div>
<div class="a" style="left:0;top:401px;width:660px;height:5px;background:#222"></div>
<div class="a" style="left:0;top:406px;width:656px;height:3px;background:#4f4f4f"></div>
<div class="t c" style="left:36.1px;width:20px;top:392.7px;color:#bdbdbd">10</div>
<div class="a" style="left:46.1px;top:401px;width:0.6px;height:5px;background:#2c2c2c"></div>
<div class="t c" style="left:60.7px;width:20px;top:392.7px;color:#bdbdbd">20</div>
<div class="a" style="left:70.7px;top:401px;width:0.6px;height:5px;background:#2c2c2c"></div>
<div class="t c" style="left:85.3px;width:20px;top:392.7px;color:#bdbdbd">30</div>
<div class="a" style="left:95.3px;top:401px;width:0.6px;height:5px;background:#2c2c2c"></div>
<div class="t c" style="left:109.9px;width:20px;top:392.7px;color:#bdbdbd">40</div>
<div class="a" style="left:119.9px;top:401px;width:0.6px;height:5px;background:#2c2c2c"></div>
<div class="t c" style="left:134.5px;width:20px;top:392.7px;color:#bdbdbd">50</div>
<div class="a" style="left:144.5px;top:401px;width:0.6px;height:5px;background:#2c2c2c"></div>
<div class="t c" style="left:159.1px;width:20px;top:392.7px;color:#bdbdbd">60</div>
<div class="a" style="left:169.1px;top:401px;width:0.6px;height:5px;background:#2c2c2c"></div>
<div class="t c" style="left:183.7px;width:20px;top:392.7px;color:#bdbdbd">70</div>
<div class="a" style="left:193.7px;top:401px;width:0.6px;height:5px;background:#2c2c2c"></div>
<div class="t c" style="left:208.3px;width:20px;top:392.7px;color:#bdbdbd">80</div>
<div class="a" style="left:218.3px;top:401px;width:0.6px;height:5px;background:#2c2c2c"></div>
<div class="t c" style="left:232.9px;width:20px;top:392.7px;color:#bdbdbd">90</div>
<div class="a" style="left:242.9px;top:401px;width:0.6px;height:5px;background:#2c2c2c"></div>
<div class="t c" style="left:257.5px;width:20px;top:392.7px;color:#bdbdbd">100</div>
<div class="a" style="left:267.5px;top:401px;width:0.6px;height:5px;background:#2c2c2c"></div>
<div class="t c" style="left:282.1px;width:20px;top:392.7px;color:#bdbdbd">110</div>
<div class="a" style="left:292.1px;top:401px;width:0.6px;height:5px;background:#2c2c2c"></div>
<div class="t c" style="left:306.7px;width:20px;top:392.7px;color:#bdbdbd">120</div>
<div class="a" style="left:316.7px;top:401px;width:0.6px;height:5px;background:#2c2c2c"></div>
<div class="t c" style="left:331.3px;width:20px;top:392.7px;color:#bdbdbd">130</div>
<div class="a" style="left:341.3px;top:401px;width:0.6px;height:5px;background:#2c2c2c"></div>
<div class="t c" style="left:355.9px;width:20px;top:392.7px;color:#bdbdbd">140</div>
<div class="a" style="left:365.9px;top:401px;width:0.6px;height:5px;background:#2c2c2c"></div>
<div class="t c" style="left:380.5px;width:20px;top:392.7px;color:#bdbdbd">150</div>
<div class="a" style="left:390.5px;top:401px;width:0.6px;height:5px;background:#2c2c2c"></div>
<div class="t c" style="left:405.1px;width:20px;top:392.7px;color:#bdbdbd">160</div>
<div class="a" style="left:415.1px;top:401px;width:0.6px;height:5px;background:#2c2c2c"></div>
<div class="t c" style="left:429.7px;width:20px;top:392.7px;color:#bdbdbd">170</div>
<div class="a" style="left:439.7px;top:401px;width:0.6px;height:5px;background:#2c2c2c"></div>
<div class="t c" style="left:454.3px;width:20px;top:392.7px;color:#bdbdbd">180</div>
<div class="a" style="left:464.3px;top:401px;width:0.6px;height:5px;background:#2c2c2c"></div>
<div class="t c" style="left:478.9px;width:20px;top:392.7px;color:#bdbdbd">190</div>
<div class="a" style="left:488.9px;top:401px;width:0.6px;height:5px;background:#2c2c2c"></div>
<div class="t c" style="left:503.5px;width:20px;top:392.7px;color:#bdbdbd">200</div>
<div class="a" style="left:513.5px;top:401px;width:0.6px;height:5px;background:#2c2c2c"></div>
<div class="t c" style="left:528.1px;width:20px;top:392.7px;color:#bdbdbd">210</div>
<div class="a" style="left:538.1px;top:401px;width:0.6px;height:5px;background:#2c2c2c"></div>
<div class="t c" style="left:552.7px;width:20px;top:392.7px;color:#bdbdbd">220</div>
<div class="a" style="left:562.7px;top:401px;width:0.6px;height:5px;background:#2c2c2c"></div>
<div class="t c" style="left:577.3px;width:20px;top:392.7px;color:#bdbdbd">230</div>
<div class="a" style="left:587.3px;top:401px;width:0.6px;height:5px;background:#2c2c2c"></div>
<div class="t c" style="left:601.9px;width:20px;top:392.7px;color:#bdbdbd">240</div>
<div class="a" style="left:611.9px;top:401px;width:0.6px;height:5px;background:#2c2c2c"></div>
<div class="t c" style="left:626.5px;width:20px;top:392.7px;color:#bdbdbd">250</div>
<div class="a" style="left:636.5px;top:401px;width:0.6px;height:5px;background:#2c2c2c"></div>
<div class="a" style="left:19px;top:392px;width:10px;height:7.5px;background:#4772b3;border-radius:1.5px"></div>
<div class="t c" style="left:19px;width:10px;top:392.7px;color:#fff">1</div>
<div class="a" style="left:23.6px;top:399.5px;width:0.9px;height:9px;background:#6a8ac8"></div>
<div class="a" style="left:635.7px;top:401px;width:0.7px;height:5px;background:#111"></div>
<!-- STATUS BAR -->
<div id="sb" class="a"></div>
<svg width="9" height="10" style="left:4px;top:410px"><rect x="1.5" y="1.5" width="5" height="7" rx="1.5" fill="none" stroke="#ccc" stroke-width="0.7"/><path d="M4 1.5 v3" stroke="#ccc" stroke-width="0.6"/><rect x="1.7" y="1.7" width="2.3" height="2.8" fill="#ccc"/></svg>
<div class="t" style="left:12px;top:412px;color:#999">Pan</div>
<svg width="9" height="10" style="left:24px;top:410px"><rect x="1.5" y="1.5" width="5" height="7" rx="1.5" fill="none" stroke="#ccc" stroke-width="0.7"/><path d="M4 1.5 v3" stroke="#ccc" stroke-width="0.6"/><rect x="4" y="1.7" width="2.3" height="2.8" fill="#ccc"/></svg>
<div class="t" style="left:32px;top:412px;color:#999">Options</div>
<svg width="9" height="10" style="left:773px;top:410px"><path d="M1.5 3 h5 v5 h-5z" fill="#aaa"/><path d="M2 7 l4.5 -4.5" stroke="#555" stroke-width="0.8"/></svg>
<div class="a" style="left:782px;top:411.5px;width:0.7px;height:6px;background:#888"></div>
<div class="t" style="left:785px;top:412px;color:#aaa">4.4.3</div>
</body></html>
